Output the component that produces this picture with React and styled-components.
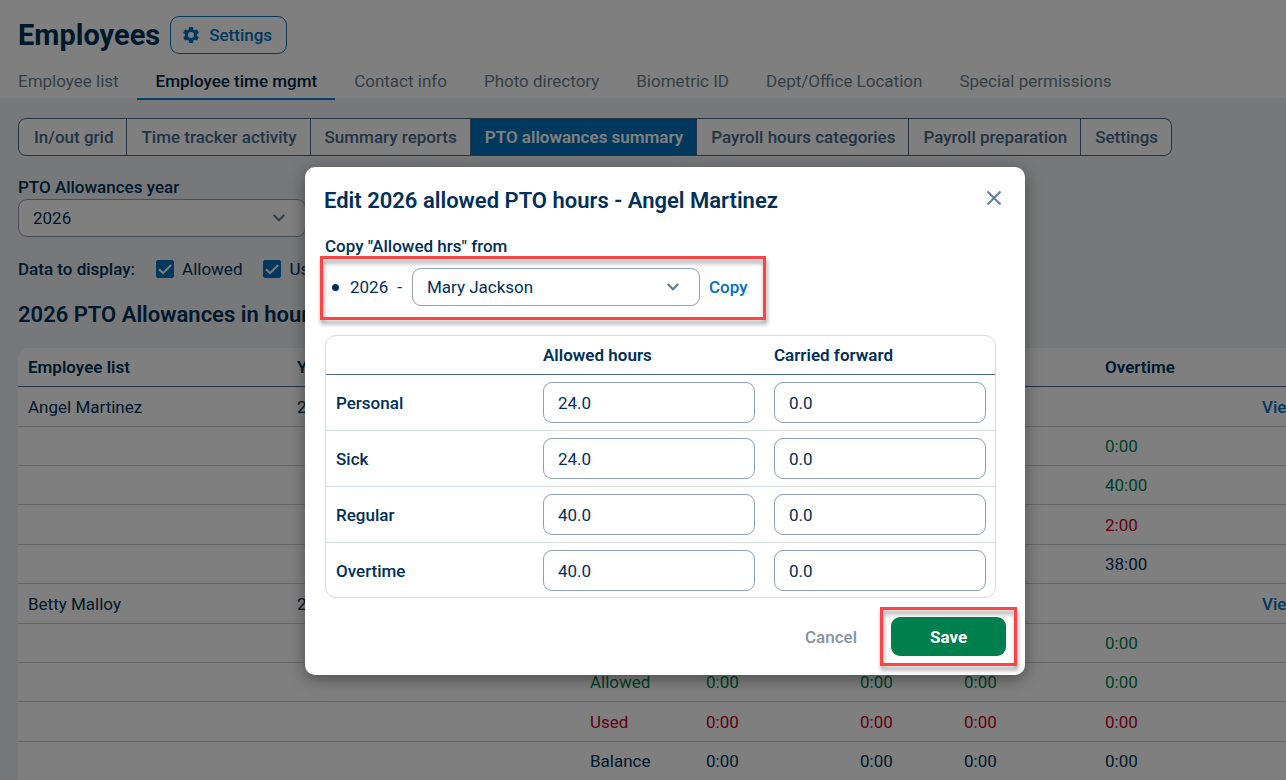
import React, { useState } from 'react';
import styled, { createGlobalStyle } from 'styled-components';

const TABS = [
  'Employee list',
  'Employee time mgmt',
  'Contact info',
  'Photo directory',
  'Biometric ID',
  'Dept/Office Location',
  'Special permissions',
];

const VIEWS = [
  'In/out grid',
  'Time tracker activity',
  'Summary reports',
  'PTO allowances summary',
  'Payroll hours categories',
  'Payroll preparation',
  'Settings',
];

const EMPLOYEES = [
  {
    name: 'Angel Martinez',
    rows: [
      { label: 'Carried', tone: 'green', hours: ['0:00', '0:00', '0:00', '0:00'] },
      { label: 'Allowed', tone: 'green', hours: ['24:00', '24:00', '40:00', '40:00'] },
      { label: 'Used', tone: 'red', hours: ['0:00', '0:00', '0:00', '2:00'] },
      { label: 'Balance', tone: 'navy', hours: ['24:00', '24:00', '40:00', '38:00'] },
    ],
  },
  {
    name: 'Betty Malloy',
    rows: [
      { label: 'Carried', tone: 'green', hours: ['0:00', '0:00', '0:00', '0:00'] },
      { label: 'Allowed', tone: 'green', hours: ['0:00', '0:00', '0:00', '0:00'] },
      { label: 'Used', tone: 'red', hours: ['0:00', '0:00', '0:00', '0:00'] },
      { label: 'Balance', tone: 'navy', hours: ['0:00', '0:00', '0:00', '0:00'] },
    ],
  },
];

const ALLOWANCES = [
  { type: 'Personal', allowed: '24.0', carried: '0.0' },
  { type: 'Sick', allowed: '24.0', carried: '0.0' },
  { type: 'Regular', allowed: '40.0', carried: '0.0' },
  { type: 'Overtime', allowed: '40.0', carried: '0.0' },
];

const GearIcon = () => (
  <svg width="20" height="20" viewBox="0 0 24 24" fill="currentColor" aria-hidden="true">
    <path d="M19.14 12.94c.04-.3.06-.61.06-.94 0-.32-.02-.64-.07-.94l2.03-1.58a.49.49 0 0 0 .12-.61l-1.92-3.32a.488.488 0 0 0-.59-.22l-2.39.96c-.5-.38-1.03-.7-1.62-.94l-.36-2.54a.484.484 0 0 0-.48-.41h-3.84c-.24 0-.43.17-.47.41l-.36 2.54c-.59.24-1.13.57-1.62.94l-2.39-.96c-.22-.08-.47 0-.59.22L2.74 8.87c-.12.21-.08.47.12.61l2.03 1.58c-.05.3-.09.63-.09.94s.02.64.07.94l-2.03 1.58a.49.49 0 0 0-.12.61l1.92 3.32c.12.22.37.29.59.22l2.39-.96c.5.38 1.03.7 1.62.94l.36 2.54c.05.24.24.41.48.41h3.84c.24 0 .44-.17.47-.41l.36-2.54c.59-.24 1.13-.56 1.62-.94l2.39.96c.22.08.47 0 .59-.22l1.92-3.32c.12-.22.07-.47-.12-.61l-2.01-1.58zM12 15.600A3.600 3.600 0 1 1 12 8.400a3.600 3.600 0 0 1 0 7.200z" />
  </svg>
);

const ChevronIcon = () => (
  <svg width="14" height="10" viewBox="0 0 14 10" fill="none" stroke="currentColor" strokeWidth="2" aria-hidden="true">
    <path d="M1.700 2 7 7.300 12.300 2" />
  </svg>
);

const CloseIcon = () => (
  <svg width="16" height="16" viewBox="0 0 16 16" fill="none" stroke="currentColor" strokeWidth="2" aria-hidden="true">
    <path d="M1.500 1.500 14.500 14.500M14.500 1.500 1.500 14.500" />
  </svg>
);

const CheckIcon = () => (
  <svg width="18" height="18" viewBox="0 0 18 18" fill="none" stroke="#fff" strokeWidth="2" aria-hidden="true">
    <path d="M3 9.200 7 13.200 15.200 5" />
  </svg>
);

const Dropdown = ({ id, value }) => (
  <SelectWrap>
    <Select id={id} defaultValue={value}>
      <option>{value}</option>
    </Select>
    <SelectArrow>
      <ChevronIcon />
    </SelectArrow>
  </SelectWrap>
);

const Check = ({ label }) => (
  <CheckLabel>
    <CheckBoxWrap>
      <CheckInput type="checkbox" defaultChecked />
      <CheckMark>
        <CheckIcon />
      </CheckMark>
    </CheckBoxWrap>
    {label}
  </CheckLabel>
);

const EditModal = ({ onClose }) => (
  <Backdrop>
    <Modal role="dialog" aria-modal="true" aria-labelledby="modal-title">
      <ModalHeader>
        <ModalTitle id="modal-title">Edit 2026 allowed PTO hours - Angel Martinez</ModalTitle>
        <CloseButton type="button" aria-label="Close" onClick={onClose}>
          <CloseIcon />
        </CloseButton>
      </ModalHeader>
      <ModalBody>
        <FieldLabel htmlFor="copy-from">Copy "Allowed hrs" from</FieldLabel>
        <CopyRow>
          <Bullet />
          <CopyYear>2026</CopyYear>
          <Dash>-</Dash>
          <Dropdown id="copy-from" value="Mary Jackson" />
          <CopyButton type="button">Copy</CopyButton>
        </CopyRow>
        <HoursTable>
          <colgroup>
            <col />
            <HoursCol />
            <HoursCol />
          </colgroup>
          <thead>
            <tr>
              <td />
              <th scope="col">Allowed hours</th>
              <th scope="col">Carried forward</th>
            </tr>
          </thead>
          <tbody>
            {ALLOWANCES.map(({ type, allowed, carried }) => (
              <tr key={type}>
                <th scope="row">{type}</th>
                <td>
                  <HoursInput aria-label={`${type} allowed hours`} defaultValue={allowed} />
                </td>
                <td>
                  <HoursInput aria-label={`${type} carried forward`} defaultValue={carried} />
                </td>
              </tr>
            ))}
          </tbody>
        </HoursTable>
      </ModalBody>
      <ModalFooter>
        <CancelButton type="button" onClick={onClose}>
          Cancel
        </CancelButton>
        <SaveArea>
          <SaveButton type="button">Save</SaveButton>
        </SaveArea>
      </ModalFooter>
    </Modal>
  </Backdrop>
);

const App = () => {
  const [open, setOpen] = useState(true);

  return (
    <Page>
      <GlobalStyle />
      <Header>
        <TitleRow>
          <Title>Employees</Title>
          <SettingsButton type="button">
            <GearIcon />
            Settings
          </SettingsButton>
        </TitleRow>
        <Tabs>
          {TABS.map((tab) => (
            <Tab key={tab} href="#" $active={tab === 'Employee time mgmt'}>
              {tab}
            </Tab>
          ))}
        </Tabs>
      </Header>
      <Content>
        <ViewSwitch>
          {VIEWS.map((view) => (
            <ViewButton key={view} type="button" $active={view === 'PTO allowances summary'}>
              {view}
            </ViewButton>
          ))}
        </ViewSwitch>
        <YearField>
          <FieldLabel htmlFor="pto-year">PTO Allowances year</FieldLabel>
          <Dropdown id="pto-year" value="2026" />
        </YearField>
        <DisplayRow>
          <DisplayTitle>Data to display:</DisplayTitle>
          <Check label="Allowed" />
          <Check label="Used" />
          <Check label="Balance" />
        </DisplayRow>
        <SectionTitle>2026 PTO Allowances in hours</SectionTitle>
        <SummaryTable>
          <colgroup>
            <Col $w={269} />
            <Col $w={293} />
            <Col $w={116} />
            <Col $w={154} />
            <Col $w={104} />
            <Col $w={141} />
            <Col $w={157} />
            <col />
          </colgroup>
          <thead>
            <tr>
              <th>Employee list</th>
              <th>Year</th>
              <th />
              <th>Personal</th>
              <th>Sick</th>
              <th>Regular</th>
              <th>Overtime</th>
              <th />
            </tr>
          </thead>
          <tbody>
            {EMPLOYEES.map(({ name, rows }) => (
              <React.Fragment key={name}>
                <tr>
                  <td>{name}</td>
                  <td>2026</td>
                  <td colSpan={5} />
                  <td>
                    <ViewLink href="#">View</ViewLink>
                  </td>
                </tr>
                {rows.map(({ label, tone, hours }) => (
                  <ToneRow key={label} $tone={tone}>
                    <td />
                    <td />
                    <td>{label}</td>
                    {hours.map((value, i) => (
                      <td key={i}>{value}</td>
                    ))}
                    <td />
                  </ToneRow>
                ))}
              </React.Fragment>
            ))}
          </tbody>
        </SummaryTable>
      </Content>
      {open && <EditModal onClose={() => setOpen(false)} />}
    </Page>
  );
};

export default App;

const TONES = { green: '#007f4e', red: '#c4001d', navy: '#003057' };

const GlobalStyle = createGlobalStyle`
  *, *::before, *::after {
    box-sizing: border-box;
  }
  body {
    margin: 0;
    overflow: hidden;
    background: #eef0f4;
    color: #003057;
    font-family: Roboto, 'Liberation Sans', sans-serif;
    font-size: 17px;
    line-height: 20px;
  }
  button, input, select {
    font: inherit;
    color: inherit;
  }
`;

/* The table needs 1330px; narrower windows cut it off on the right. */
const Page = styled.div`
  position: relative;
  min-width: 1330px;
  height: 100vh;
  overflow: hidden;
`;

const Header = styled.header`
  padding: 16px 18px 0;
  background: #fff;
`;

const TitleRow = styled.div`
  display: flex;
  align-items: center;
  gap: 10px;
`;

const Title = styled.h1`
  margin: 0;
  font-size: 29px;
  line-height: 38px;
  font-weight: 700;
`;

const SettingsButton = styled.button`
  display: flex;
  align-items: center;
  gap: 8px;
  height: 38px;
  padding: 0 14px 0 10px;
  border: 1px solid #0071bc;
  border-radius: 9px;
  background: none;
  color: #0071bc;
  font-weight: 500;
`;

const Tabs = styled.nav`
  display: flex;
  padding-top: 15px;
`;

const Tab = styled.a`
  margin-bottom: -2px;
  padding: 2px 18px 7px 19px;
  border-bottom: 2px solid ${({ $active }) => ($active ? '#0086d6' : 'transparent')};
  color: ${({ $active }) => ($active ? '#002240' : '#6b7f8e')};
  font-weight: ${({ $active }) => ($active ? 500 : 400)};
  text-decoration: none;
  white-space: nowrap;

  &:first-child {
    padding-left: 0;
  }
`;

const Content = styled.main`
  padding: 20px 18px 0;
`;

const ViewSwitch = styled.div`
  display: inline-flex;
  overflow: hidden;
  border: 1px solid #46698a;
  border-radius: 8px;
  background: #fff;
`;

const ViewButton = styled.button`
  height: 36px;
  padding: 0 13px 0 14px;
  border: 0;
  background: ${({ $active }) => ($active ? '#0071bc' : 'none')};
  color: ${({ $active }) => ($active ? '#fff' : '#46698a')};
  font-weight: ${({ $active }) => ($active ? 600 : 500)};
  white-space: nowrap;

  &:first-child {
    padding-left: 15px;
  }

  & + & {
    border-left: 1px solid #46698a;
  }
`;

const YearField = styled.div`
  width: 288px;
  margin-top: 17px;
`;

const FieldLabel = styled.label`
  display: block;
  padding: 4px 0 2px;
  font-weight: 500;
`;

const SelectWrap = styled.div`
  position: relative;
  width: 288px;
`;

const Select = styled.select`
  display: block;
  width: 100%;
  height: 38px;
  padding: 0 40px 0 14px;
  border: 1px solid #8ba0b5;
  border-radius: 9px;
  background: #fff;
  appearance: none;
`;

const SelectArrow = styled.span`
  position: absolute;
  top: 0;
  right: 20px;
  display: flex;
  align-items: center;
  height: 100%;
  color: #5f7a90;
  pointer-events: none;
`;

const DisplayRow = styled.div`
  display: flex;
  align-items: center;
  gap: 21px;
  margin-top: 22px;
`;

const DisplayTitle = styled.span`
  font-weight: 500;
`;

const CheckLabel = styled.label`
  display: flex;
  align-items: center;
  gap: 8px;
`;

const CheckBoxWrap = styled.span`
  display: grid;
  width: 18px;
  height: 18px;
`;

const CheckInput = styled.input`
  grid-area: 1 / 1;
  width: 18px;
  height: 18px;
  margin: 0;
  border: 1px solid #0071bc;
  border-radius: 2px;
  background: #fff;
  appearance: none;

  &:checked {
    background: #0071bc;
  }
`;

const CheckMark = styled.span`
  grid-area: 1 / 1;
  display: flex;
  pointer-events: none;
`;

const SectionTitle = styled.h2`
  margin: 22px 0 19px;
  font-size: 22px;
  line-height: 28px;
  font-weight: 600;
`;

const SummaryTable = styled.table`
  width: 100%;
  table-layout: fixed;
  border-spacing: 0;
  border-radius: 10px 10px 0 0;
  background: #fff;

  th,
  td {
    height: 39px;
    padding: 0 10px;
    border-bottom: 1px solid #c9ced4;
    text-align: left;
    white-space: nowrap;
  }

  th {
    border-color: #46698a;
    font-weight: 600;
  }

  tbody tr:nth-child(5n + 1) td,
  tbody tr:nth-child(5n + 4) td {
    height: 40px;
  }
`;

const Col = styled.col`
  width: ${({ $w }) => $w}px;
`;

const ToneRow = styled.tr`
  color: ${({ $tone }) => TONES[$tone]};
`;

const ViewLink = styled.a`
  color: #0071bc;
  font-weight: 500;
  text-decoration: none;
`;

const Backdrop = styled.div`
  position: absolute;
  inset: 0;
  display: flex;
  align-items: flex-start;
  justify-content: center;
  padding-top: 167px;
  background: rgba(0, 0, 0, 0.5);
`;

const Modal = styled.section`
  width: 720px;
  border-radius: 10px;
  background: #fff;
  box-shadow: 0 4px 16px rgba(0, 0, 0, 0.4);
`;

const ModalHeader = styled.div`
  display: flex;
  align-items: flex-start;
  justify-content: space-between;
  padding: 19px 19px 0;
`;

const ModalTitle = styled.h2`
  margin: 0;
  padding-top: 1px;
  font-size: 22px;
  line-height: 28px;
  font-weight: 600;
`;

const CloseButton = styled.button`
  display: flex;
  padding: 4px;
  border: 0;
  background: none;
  color: #5f7f9f;
`;

const ModalBody = styled.div`
  padding: 17px 29px 0 20px;
`;

/* Red frame that points out the step; it hangs a little outside of its row. */
const Callout = styled.div`
  position: relative;

  &::after {
    content: '';
    position: absolute;
    border: 3px solid #fb4444;
    filter: drop-shadow(1px 4px 2px rgba(0, 0, 0, 0.4));
    pointer-events: none;
  }
`;

const CopyRow = styled(Callout)`
  display: flex;
  align-items: center;
  width: fit-content;
  margin: 10px 0 29px;
  padding-left: 7px;

  &::after {
    inset: -12px -19px -14px -5px;
  }
`;

const Bullet = styled.span`
  width: 7px;
  height: 7px;
  margin-right: 11px;
  border-radius: 50%;
  background: #003057;
`;

const CopyYear = styled.span`
  margin-right: 9px;
`;

const Dash = styled.span`
  margin-right: 10px;
`;

const CopyButton = styled.button`
  margin-left: 9px;
  padding: 0;
  border: 0;
  background: none;
  color: #0071bc;
  font-weight: 500;
`;

const HoursTable = styled.table`
  width: 100%;
  table-layout: fixed;
  border: 1px solid #d5dbe3;
  border-radius: 11px;
  border-spacing: 0;

  th,
  td {
    padding: 7px 9px 7px 10px;
    border-bottom: 1px solid #d5dbe3;
    text-align: left;
  }

  th {
    font-weight: 500;
  }

  thead th,
  thead td {
    padding: 9px 10px;
    border-color: #46698a;
    font-weight: 600;
  }

  tbody tr:last-child > * {
    padding-bottom: 6px;
    border-bottom: 0;
  }
`;

const HoursCol = styled.col`
  width: 231px;
`;

const HoursInput = styled.input`
  display: block;
  width: 100%;
  height: 41px;
  padding: 0 14px;
  border: 1px solid #8ba0b5;
  border-radius: 9px;
  background: #fff;
`;

const ModalFooter = styled.div`
  display: flex;
  align-items: center;
  justify-content: flex-end;
  gap: 34px;
  padding: 19px;
`;

const CancelButton = styled.button`
  padding: 0;
  border: 0;
  background: none;
  color: #8592a0;
  font-weight: 500;
`;

const SaveArea = styled(Callout)`
  &::after {
    inset: -10px -11px -10px -11px;
  }
`;

const SaveButton = styled.button`
  display: block;
  width: 115px;
  height: 39px;
  border: 0;
  border-radius: 9px;
  background: #007f4e;
  color: #fff;
  font-weight: 700;
`;
